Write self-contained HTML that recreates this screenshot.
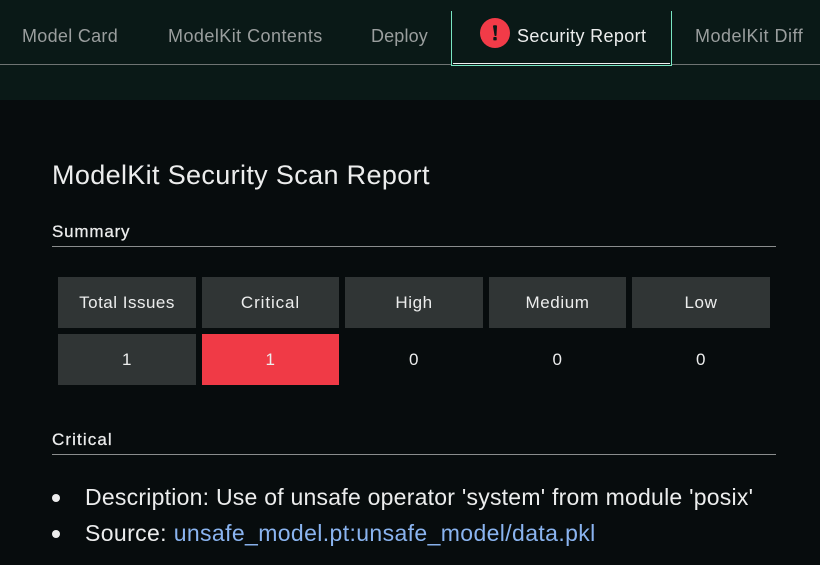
<!DOCTYPE html>
<html>
<head>
<meta charset="utf-8">
<style>
html,body{margin:0;padding:0;width:820px;height:565px;overflow:hidden;background:#070c0d}
body{position:relative;font-family:"Liberation Sans",sans-serif;color:#eceded}
.a{position:absolute;white-space:nowrap}
.t{font-size:18px;line-height:20px;color:#9a9e9e;top:26px}
.c{position:absolute;height:51px;line-height:51px;text-align:center;font-size:17px;letter-spacing:.6px;color:#eceded}
.g{background:#303535}
.h{position:absolute;left:52px;width:724px;height:1px;background:#8a8d8d}
.s{font-size:17px;line-height:20px;color:#eceded;-webkit-text-stroke:.25px #eceded}
</style>
</head>
<body>
<div class="a" style="left:0;top:0;width:820px;height:100px;background:#0a1917"></div>
<div class="a" style="left:0;top:64px;width:820px;height:1px;background:#6f7473"></div>

<div class="a t" style="left:22px;letter-spacing:.3px">Model Card</div>
<div class="a t" style="left:168px;letter-spacing:.45px">ModelKit Contents</div>
<div class="a t" style="left:371px;letter-spacing:.15px">Deploy</div>
<div class="a t" style="left:695px;letter-spacing:.5px">ModelKit Diff</div>

<div class="a" style="left:451px;top:11px;width:219px;height:54px;border:1px solid #78e6c2;border-top:0;background:#0a1917"></div>
<div class="a" style="left:453px;top:63px;width:217px;height:1px;background:#f0f0f0"></div>
<svg class="a" style="left:480px;top:18px" width="30" height="30" viewBox="0 0 30 30">
<circle cx="15" cy="15" r="15" fill="#f23b48"/>
<path d="M13 8.2a1 1 0 0 1 1-1h2a1 1 0 0 1 1 1l-.5 9a.8.8 0 0 1-.8.8h-.4a.8.8 0 0 1-.8-.8z" fill="#0a1917"/>
<rect x="13.3" y="19" width="3.4" height="3.4" rx=".8" fill="#0a1917"/>
</svg>
<div class="a t" style="left:517px;color:#eceded;letter-spacing:.35px">Security Report</div>

<div class="a" style="left:52px;top:159px;font-size:27px;line-height:32px;letter-spacing:.35px;color:#eceded">ModelKit Security Scan Report</div>

<div class="a s" style="left:52px;top:222px;letter-spacing:.8px">Summary</div>
<div class="h" style="top:246px"></div>

<div class="c g" style="left:58px;top:277px;width:138px;letter-spacing:.5px">Total Issues</div>
<div class="c g" style="left:202px;top:277px;width:137px;letter-spacing:.9px">Critical</div>
<div class="c g" style="left:345px;top:277px;width:138px">High</div>
<div class="c g" style="left:489px;top:277px;width:137px">Medium</div>
<div class="c g" style="left:632px;top:277px;width:138px">Low</div>

<div class="c g" style="left:58px;top:334px;width:138px">1</div>
<div class="c" style="left:202px;top:334px;width:137px;background:#f03a46">1</div>
<div class="c" style="left:345px;top:334px;width:138px">0</div>
<div class="c" style="left:489px;top:334px;width:137px">0</div>
<div class="c" style="left:632px;top:334px;width:138px">0</div>

<div class="a s" style="left:52px;top:430px;letter-spacing:1.1px">Critical</div>
<div class="h" style="top:454px"></div>

<div class="a" style="left:52px;top:494px;width:8px;height:8px;border-radius:50%;background:#eceded"></div>
<div class="a" style="left:52px;top:530px;width:8px;height:8px;border-radius:50%;background:#eceded"></div>
<div class="a" style="left:85px;top:483px;font-size:23px;line-height:28px;letter-spacing:.24px;color:#eceded">Description: Use of unsafe operator 'system' from module 'posix'</div>
<div class="a" style="left:85px;top:519px;font-size:23px;line-height:28px;letter-spacing:.38px;color:#eceded">Source: <span style="color:#8ab4f0">unsafe_model.pt:unsafe_model/data.pkl</span></div>
</body>
</html>
